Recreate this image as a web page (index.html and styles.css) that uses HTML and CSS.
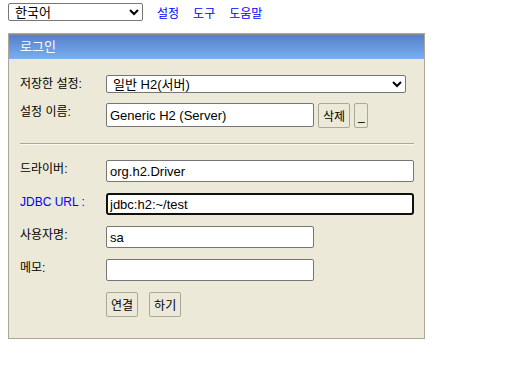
FILE: index.html
```html
<!DOCTYPE html>
<html lang="ko">
<head>
<meta charset="UTF-8">
<title>H2 Console</title>
<link rel="stylesheet" href="styles.css">
</head>
<body>

<div class="topbar">
  <select class="lang">
    <option>한국어</option>
  </select>
  <a href="#">설정</a>
  <a href="#">도구</a>
  <a href="#">도움말</a>
</div>

<div class="login">
  <div class="login-head">로그인</div>
  <form class="login-body">
    <div class="row row-select">
      <label>저장한 설정:</label>
      <select class="setting">
        <option>일반 H2(서버)</option>
      </select>
    </div>
    <div class="row row-name">
      <label>설정 이름:</label>
      <div class="inline">
        <input type="text" class="short" value="Generic H2 (Server)">
        <button type="button" class="btn">삭제</button>
        <button type="button" class="btn btn-small">_</button>
      </div>
    </div>
    <hr>
    <div class="row">
      <label>드라이버:</label>
      <input type="text" class="long" value="org.h2.Driver">
    </div>
    <div class="row">
      <label class="blue">JDBC URL :</label>
      <input type="text" class="long focused" value="jdbc:h2:~/test">
    </div>
    <div class="row">
      <label>사용자명:</label>
      <input type="text" class="short" value="sa">
    </div>
    <div class="row">
      <label>메모:</label>
      <input type="password" class="short">
    </div>
    <div class="row">
      <span></span>
      <div class="inline actions">
        <button type="button" class="btn">연결</button>
        <button type="button" class="btn">하기</button>
      </div>
    </div>
  </form>
</div>

</body>
</html>
```

FILE: styles.css
```css
body {
  margin: 0 8px;
  padding-top: 3px;
  font-family: "Liberation Sans", Arial, "Noto Sans CJK KR", sans-serif;
  font-size: 12px;
  background: #ffffff;
}

.topbar {
  display: flex;
  align-items: center;
  height: 18px;
}

.topbar a {
  color: #0000ff;
  text-decoration: none;
  margin-left: 14px;
  font-size: 12px;
}

.topbar .lang {
  width: 135px;
  height: 18px;
  margin-right: 0;
}

select {
  font-family: "Liberation Sans", Arial, "Noto Sans CJK KR", sans-serif;
  font-size: 13px;
  border: 1px solid #767676;
  border-radius: 2px;
  background: #ffffff;
  padding: 0 0 0 2px;
  margin: 0;
}

.login {
  margin-top: 12px;
  width: 415px;
  border: 1px solid #aca899;
  background: #ece9d8;
}

.login-head {
  height: 24px;
  line-height: 23px;
  padding-left: 11px;
  border-top: 1px solid #8c8c8c;
  background: linear-gradient(#557fcb, #79aff0);
  color: #ffffff;
  font-size: 13px;
  font-weight: normal;
}

.login-body {
  padding: 16px 10px 21px 11px;
  display: flex;
  flex-direction: column;
  gap: 11px;
}

.row {
  display: grid;
  grid-template-columns: 86px 1fr;
  align-items: start;
}

.row label {
  line-height: 16px;
  padding-top: 1px;
  color: #000000;
}

.row label.blue {
  color: #0000ff;
}

.row-select {
  margin-bottom: -1px;
}

.row-select .setting {
  width: 300px;
  height: 18px;
}

.inline {
  display: flex;
  align-items: start;
  gap: 4px;
}

input {
  font-family: "Liberation Sans", Arial, "Noto Sans CJK KR", sans-serif;
  font-size: 13px;
  height: 22px;
  box-sizing: border-box;
  border: 1px solid #767676;
  border-radius: 2px;
  padding: 1px 3px 0;
  margin: 0;
  background: #ffffff;
}

input.short {
  width: 208px;
}

input.long {
  width: 308px;
}

input.focused {
  border: 2px solid #101010;
  padding-left: 2px;
  border-radius: 3px;
}

.row-name input {
  height: 24px;
}

hr {
  border: none;
  border-top: 1px solid #aca899;
  border-bottom: 1px solid #f8f7f2;
  margin: 4px 0 4px;
}

.btn {
  font-family: "Liberation Sans", Arial, "Noto Sans CJK KR", sans-serif;
  font-size: 12px;
  height: 25px;
  padding: 0 4px;
  border: 1px solid #aca899;
  border-radius: 2px;
  background: #ece9d8;
  color: #000000;
  cursor: pointer;
}

.btn-small {
  padding: 0 3px;
  width: 14px;
}

.actions {
  gap: 11px;
}
```
